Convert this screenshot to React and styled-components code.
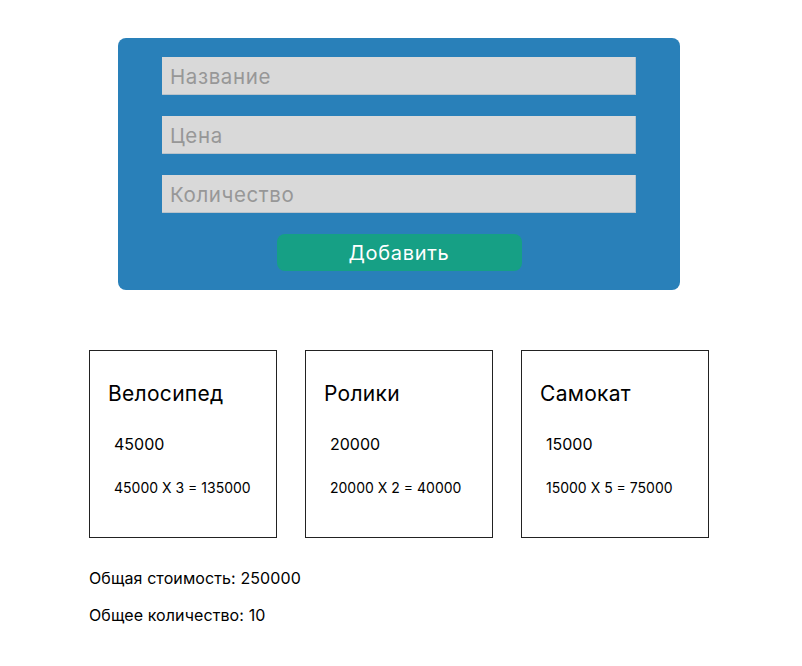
import React, { useState } from 'react'
import styled, { createGlobalStyle } from 'styled-components'

const GlobalStyle = createGlobalStyle`
  body {
    margin: 0;
    background: #ffffff;
    font-family: Inter, 'Noto Sans', sans-serif;
    color: #000000;
  }
`

const Page = styled.div`
  width: 620px;
  padding: 38px 0 0 89px;
`

const Form = styled.form`
  display: flex;
  flex-direction: column;
  align-items: center;
  gap: 21px;
  margin: 0 29px 0 29px;
  padding: 19px 44px;
  background: #2980b9;
  border-radius: 8px;
`

const Input = styled.input`
  box-sizing: border-box;
  width: 100%;
  height: 38px;
  padding: 2px 8px 0;
  border: none;
  border-right: 1px solid #b9c3cb;
  border-bottom: 1px solid #b9c3cb;
  background: #d9d9d9;
  font-family: Inter, sans-serif;
  font-size: 20.5px;
  letter-spacing: 0.6px;
  color: #333;
  outline: none;

  &::placeholder {
    color: #979797;
  }
`

const Button = styled.button`
  width: 245px;
  height: 37px;
  padding-top: 1px;
  border: none;
  border-radius: 8px;
  background: #16a085;
  color: #ffffff;
  font-family: Inter, sans-serif;
  font-size: 20px;
  letter-spacing: 0.7px;
  cursor: pointer;
`

const Cards = styled.div`
  display: grid;
  grid-template-columns: repeat(3, 188px);
  gap: 28px;
  margin-top: 60px;
`

const Card = styled.div`
  box-sizing: border-box;
  height: 188px;
  padding: 31px 18px 0;
  border: 1px solid #222;
  display: flex;
  flex-direction: column;
`

const Title = styled.h3`
  margin: 0;
  font-size: 21px;
  line-height: 24px;
  letter-spacing: 0.3px;
  font-weight: 400;
`

const Price = styled.p`
  margin: 28px 0 0 6px;
  font-size: 16px;
  line-height: 20px;
`

const Sum = styled.p`
  margin: 25px 0 0 6px;
  font-size: 14px;
  line-height: 18px;
`

const Total = styled.p`
  margin: ${(p) => (p.$first ? '30px' : '17px')} 0 0;
  font-size: 16px;
  line-height: 20px;
  letter-spacing: 0.1px;
`

const initial = [
  { name: 'Велосипед', price: 45000, qty: 3 },
  { name: 'Ролики', price: 20000, qty: 2 },
  { name: 'Самокат', price: 15000, qty: 5 },
]

const App = () => {
  const [items] = useState(initial)

  const totalCost = items.reduce((s, i) => s + i.price * i.qty, 0)
  const totalQty = items.reduce((s, i) => s + i.qty, 0)

  return (
    <>
      <GlobalStyle />
      <Page>
        <Form onSubmit={(e) => e.preventDefault()}>
          <Input placeholder="Название" />
          <Input placeholder="Цена" />
          <Input placeholder="Количество" />
          <Button type="submit">Добавить</Button>
        </Form>
        <Cards>
          {items.map((item) => (
            <Card key={item.name}>
              <Title>{item.name}</Title>
              <Price>{item.price}</Price>
              <Sum>
                {item.price} X {item.qty} = {item.price * item.qty}
              </Sum>
            </Card>
          ))}
        </Cards>
        <Total $first>Общая стоимость: {totalCost}</Total>
        <Total>Общее количество: {totalQty}</Total>
      </Page>
    </>
  )
}

export default App
